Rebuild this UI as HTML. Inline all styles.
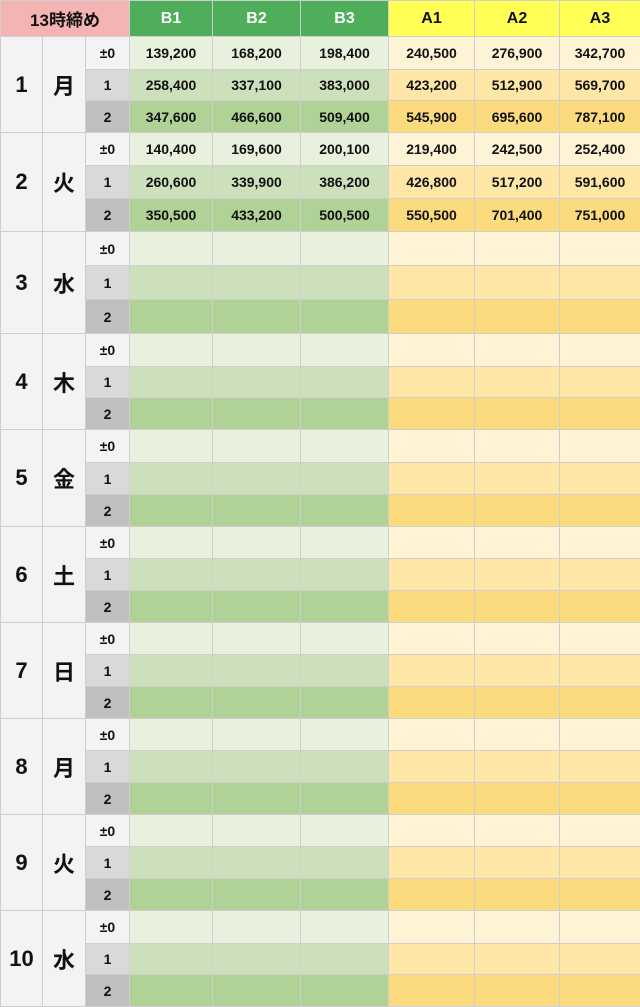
<!DOCTYPE html>
<html><head><meta charset="utf-8"><style>
html,body{margin:0;padding:0;background:#fff;}
table{border-collapse:collapse;table-layout:fixed;width:640px;font-family:"Liberation Sans","Noto Sans CJK JP",sans-serif;font-weight:bold;color:#111;}
td{border:1px solid #cfcfcf;text-align:center;padding:0;font-size:14px;overflow:hidden;}
.h0{background:#f4b4b4;font-size:17px;}
.hb{background:#4fae5a;color:#fff;font-size:16px;}
.ha{background:#ffff55;font-size:16px;}
.d{background:#f3f3f3;font-size:22px;}
.s0{background:#f3f3f3;}.s1{background:#d9d9d9;}.s2{background:#bfbfbf;}
.g0{background:#e7f1dd;}.g1{background:#cce1bb;}.g2{background:#b1d297;}
.y0{background:#fef3d5;}.y1{background:#fde6a6;}.y2{background:#fbdb7d;}
</style></head><body>
<table>
<colgroup><col style="width:42px"><col style="width:43px"><col style="width:44px"><col style="width:83px"><col style="width:88px"><col style="width:88px"><col style="width:86px"><col style="width:85px"><col style="width:81px"></colgroup>
<tr style="height:36px"><td class="h0" colspan="3">13時締め</td><td class="hb">B1</td><td class="hb">B2</td><td class="hb">B3</td><td class="ha">A1</td><td class="ha">A2</td><td class="ha">A3</td></tr>

<tr style="height:33px"><td class="d" rowspan="3">1</td><td class="d" rowspan="3">月</td><td class="s0">±0</td><td class="g0">139,200</td><td class="g0">168,200</td><td class="g0">198,400</td><td class="y0">240,500</td><td class="y0">276,900</td><td class="y0">342,700</td></tr>
<tr style="height:31px"><td class="s1">1</td><td class="g1">258,400</td><td class="g1">337,100</td><td class="g1">383,000</td><td class="y1">423,200</td><td class="y1">512,900</td><td class="y1">569,700</td></tr>
<tr style="height:32px"><td class="s2">2</td><td class="g2">347,600</td><td class="g2">466,600</td><td class="g2">509,400</td><td class="y2">545,900</td><td class="y2">695,600</td><td class="y2">787,100</td></tr>

<tr style="height:33px"><td class="d" rowspan="3">2</td><td class="d" rowspan="3">火</td><td class="s0">±0</td><td class="g0">140,400</td><td class="g0">169,600</td><td class="g0">200,100</td><td class="y0">219,400</td><td class="y0">242,500</td><td class="y0">252,400</td></tr>
<tr style="height:33px"><td class="s1">1</td><td class="g1">260,600</td><td class="g1">339,900</td><td class="g1">386,200</td><td class="y1">426,800</td><td class="y1">517,200</td><td class="y1">591,600</td></tr>
<tr style="height:33px"><td class="s2">2</td><td class="g2">350,500</td><td class="g2">433,200</td><td class="g2">500,500</td><td class="y2">550,500</td><td class="y2">701,400</td><td class="y2">751,000</td></tr>

<tr style="height:34px"><td class="d" rowspan="3">3</td><td class="d" rowspan="3">水</td><td class="s0">±0</td><td class="g0"></td><td class="g0"></td><td class="g0"></td><td class="y0"></td><td class="y0"></td><td class="y0"></td></tr>
<tr style="height:34px"><td class="s1">1</td><td class="g1"></td><td class="g1"></td><td class="g1"></td><td class="y1"></td><td class="y1"></td><td class="y1"></td></tr>
<tr style="height:34px"><td class="s2">2</td><td class="g2"></td><td class="g2"></td><td class="g2"></td><td class="y2"></td><td class="y2"></td><td class="y2"></td></tr>

<tr style="height:33px"><td class="d" rowspan="3">4</td><td class="d" rowspan="3">木</td><td class="s0">±0</td><td class="g0"></td><td class="g0"></td><td class="g0"></td><td class="y0"></td><td class="y0"></td><td class="y0"></td></tr>
<tr style="height:31px"><td class="s1">1</td><td class="g1"></td><td class="g1"></td><td class="g1"></td><td class="y1"></td><td class="y1"></td><td class="y1"></td></tr>
<tr style="height:32px"><td class="s2">2</td><td class="g2"></td><td class="g2"></td><td class="g2"></td><td class="y2"></td><td class="y2"></td><td class="y2"></td></tr>

<tr style="height:33px"><td class="d" rowspan="3">5</td><td class="d" rowspan="3">金</td><td class="s0">±0</td><td class="g0"></td><td class="g0"></td><td class="g0"></td><td class="y0"></td><td class="y0"></td><td class="y0"></td></tr>
<tr style="height:32px"><td class="s1">1</td><td class="g1"></td><td class="g1"></td><td class="g1"></td><td class="y1"></td><td class="y1"></td><td class="y1"></td></tr>
<tr style="height:32px"><td class="s2">2</td><td class="g2"></td><td class="g2"></td><td class="g2"></td><td class="y2"></td><td class="y2"></td><td class="y2"></td></tr>

<tr style="height:32px"><td class="d" rowspan="3">6</td><td class="d" rowspan="3">土</td><td class="s0">±0</td><td class="g0"></td><td class="g0"></td><td class="g0"></td><td class="y0"></td><td class="y0"></td><td class="y0"></td></tr>
<tr style="height:32px"><td class="s1">1</td><td class="g1"></td><td class="g1"></td><td class="g1"></td><td class="y1"></td><td class="y1"></td><td class="y1"></td></tr>
<tr style="height:32px"><td class="s2">2</td><td class="g2"></td><td class="g2"></td><td class="g2"></td><td class="y2"></td><td class="y2"></td><td class="y2"></td></tr>

<tr style="height:32px"><td class="d" rowspan="3">7</td><td class="d" rowspan="3">日</td><td class="s0">±0</td><td class="g0"></td><td class="g0"></td><td class="g0"></td><td class="y0"></td><td class="y0"></td><td class="y0"></td></tr>
<tr style="height:32px"><td class="s1">1</td><td class="g1"></td><td class="g1"></td><td class="g1"></td><td class="y1"></td><td class="y1"></td><td class="y1"></td></tr>
<tr style="height:32px"><td class="s2">2</td><td class="g2"></td><td class="g2"></td><td class="g2"></td><td class="y2"></td><td class="y2"></td><td class="y2"></td></tr>

<tr style="height:32px"><td class="d" rowspan="3">8</td><td class="d" rowspan="3">月</td><td class="s0">±0</td><td class="g0"></td><td class="g0"></td><td class="g0"></td><td class="y0"></td><td class="y0"></td><td class="y0"></td></tr>
<tr style="height:32px"><td class="s1">1</td><td class="g1"></td><td class="g1"></td><td class="g1"></td><td class="y1"></td><td class="y1"></td><td class="y1"></td></tr>
<tr style="height:32px"><td class="s2">2</td><td class="g2"></td><td class="g2"></td><td class="g2"></td><td class="y2"></td><td class="y2"></td><td class="y2"></td></tr>

<tr style="height:32px"><td class="d" rowspan="3">9</td><td class="d" rowspan="3">火</td><td class="s0">±0</td><td class="g0"></td><td class="g0"></td><td class="g0"></td><td class="y0"></td><td class="y0"></td><td class="y0"></td></tr>
<tr style="height:32px"><td class="s1">1</td><td class="g1"></td><td class="g1"></td><td class="g1"></td><td class="y1"></td><td class="y1"></td><td class="y1"></td></tr>
<tr style="height:32px"><td class="s2">2</td><td class="g2"></td><td class="g2"></td><td class="g2"></td><td class="y2"></td><td class="y2"></td><td class="y2"></td></tr>

<tr style="height:33px"><td class="d" rowspan="3">10</td><td class="d" rowspan="3">水</td><td class="s0">±0</td><td class="g0"></td><td class="g0"></td><td class="g0"></td><td class="y0"></td><td class="y0"></td><td class="y0"></td></tr>
<tr style="height:31px"><td class="s1">1</td><td class="g1"></td><td class="g1"></td><td class="g1"></td><td class="y1"></td><td class="y1"></td><td class="y1"></td></tr>
<tr style="height:32px"><td class="s2">2</td><td class="g2"></td><td class="g2"></td><td class="g2"></td><td class="y2"></td><td class="y2"></td><td class="y2"></td></tr>
</table>
</body></html>
